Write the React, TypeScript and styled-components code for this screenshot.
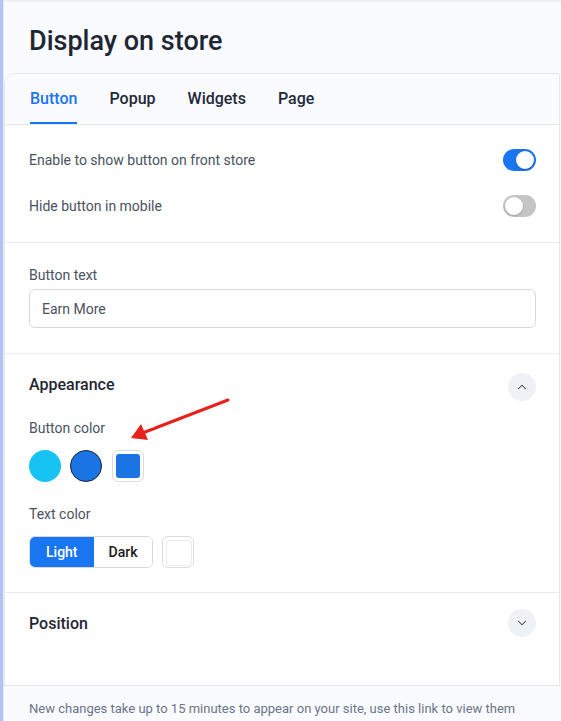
import React, { useState } from 'react';
import styled, { createGlobalStyle } from 'styled-components';
import { ChevronUp, ChevronDown } from 'lucide-react';

const GlobalStyle = createGlobalStyle`
    html, body {
        margin: 0;
        padding: 0;
        background: #f9fbff;
        font-family: Roboto, 'Liberation Sans', sans-serif;
        -webkit-font-smoothing: antialiased;
    }
    * {
        box-sizing: border-box;
    }
`;

const BLUE = '#1a75f0';

const Page = styled.div`
    display: flex;
    min-height: 721px;
    background: #f9fbff;
    box-shadow: inset 0 3px 3px -2px rgba(0, 0, 0, 0.08);
`;

const Stripe = styled.div`
    width: 4px;
    flex: none;
    background: #b3c2f2;
    border-right: 1px solid #e4e9fb;
`;

const Main = styled.div`
    flex: 1;
    min-width: 0;
    padding: 0 1px 0 0;
`;

const Title = styled.h1`
    margin: 0;
    padding: 24px 0 15px 25px;
    font-size: 27px;
    line-height: 34px;
    font-weight: 500;
    color: #1f2633;
`;

const Card = styled.div`
    border: 1px solid #e5e7eb;
    border-top-left-radius: 12px;
    background: #fff;
    overflow: hidden;
`;

const Tabs = styled.div`
    display: flex;
    gap: 32px;
    padding: 0 25px;
    height: 51px;
    background: #f9fbff;
    border-bottom: 1px solid #e5e7eb;
`;

const Tab = styled.div<{ $active?: boolean }>`
    display: flex;
    align-items: center;
    font-size: 16px;
    font-weight: 500;
    color: ${(p) => (p.$active ? BLUE : '#1f2937')};
    border-bottom: 2px solid ${(p) => (p.$active ? BLUE : 'transparent')};
`;

const Section = styled.div<{ $pt?: number; $pb?: number }>`
    position: relative;
    padding: ${(p) => p.$pt ?? 24}px 23px ${(p) => p.$pb ?? 24}px 24px;
    border-bottom: 1px solid #e8eaee;
    &:last-child {
        border-bottom: none;
    }
`;

const ToggleRow = styled.div`
    display: flex;
    align-items: center;
    justify-content: space-between;
    & + & {
        margin-top: 24px;
    }
`;

const RowLabel = styled.span`
    font-size: 14px;
    color: #4a5260;
`;

const Switch = styled.button<{ $on?: boolean }>`
    width: 33px;
    height: 22px;
    border: none;
    border-radius: 11px;
    padding: 2px;
    background: ${(p) => (p.$on ? BLUE : '#c4c4c4')};
    display: flex;
    justify-content: ${(p) => (p.$on ? 'flex-end' : 'flex-start')};
    cursor: pointer;
    &::after {
        content: '';
        width: 18px;
        height: 18px;
        border-radius: 50%;
        background: #fff;
        box-shadow: 0 1px 2px rgba(0, 0, 0, 0.2);
    }
`;

const FieldLabel = styled.div<{ $mb?: number }>`
    font-size: 14px;
    line-height: 20px;
    color: #4a5260;
    margin-bottom: ${(p) => p.$mb ?? 4}px;
`;

const TextInput = styled.input`
    display: block;
    width: 100%;
    height: 39px;
    border: 1px solid #d9d9d9;
    border-radius: 6px;
    padding: 0 12px;
    font-family: inherit;
    font-size: 14px;
    color: #4a5260;
    outline: none;
`;

const SectionHeader = styled.div`
    display: flex;
    align-items: center;
    justify-content: space-between;
`;

const SectionTitle = styled.span<{ $raise?: number }>`
    font-size: 16px;
    font-weight: 500;
    color: #1f2633;
    margin-top: ${(p) => -(p.$raise ?? 0)}px;
`;

const RoundButton = styled.button`
    width: 28px;
    height: 28px;
    border-radius: 50%;
    border: none;
    background: #eef1f5;
    color: #374151;
    display: flex;
    align-items: center;
    justify-content: center;
    padding: 0;
    cursor: pointer;
`;

const Swatches = styled.div`
    display: flex;
    gap: 9px;
    align-items: center;
`;

const Circle = styled.div<{ $color: string; $selected?: boolean }>`
    width: 32px;
    height: 32px;
    border-radius: 50%;
    background: ${(p) => p.$color};
    border: ${(p) => (p.$selected ? '1.5px solid #1b2230' : 'none')};
`;

const SquareSwatch = styled.div<{ $color: string }>`
    width: 32px;
    height: 32px;
    border: 1px solid #dcdcdc;
    border-radius: 6px;
    padding: 3px;
    margin-left: 1px;
    &::after {
        content: '';
        display: block;
        width: 100%;
        height: 100%;
        border-radius: 3px;
        background: ${(p) => p.$color};
        border: ${(p) => (p.$color === '#fff' ? '1px solid #ececec' : 'none')};
    }
`;

const Group = styled.div<{ $mt?: number }>`
    margin-top: ${(p) => p.$mt ?? 22}px;
`;

const ColorRow = styled.div`
    display: flex;
    gap: 8px;
    align-items: center;
`;

const Segmented = styled.div`
    display: flex;
    height: 32px;
    border: 1px solid #d9d9d9;
    border-radius: 6px;
    overflow: hidden;
`;

const Segment = styled.button<{ $active?: boolean }>`
    border: none;
    padding: 0 ${(p) => (p.$active ? 16 : 15)}px;
    font-family: inherit;
    font-size: 14px;
    font-weight: 500;
    background: ${(p) => (p.$active ? BLUE : '#fff')};
    color: ${(p) => (p.$active ? '#fff' : '#1a1a1a')};
    cursor: pointer;
`;

const Arrow = styled.svg`
    position: absolute;
    left: 114px;
    top: 39px;
    pointer-events: none;
`;

const Footer = styled.div`
    padding: 13px 0 0 25px;
    font-size: 13px;
    line-height: 20px;
    color: #6b7589;
`;

const Link = styled.a`
    color: ${BLUE};
    text-decoration: none;
    margin-right: 6px;
`;

const App: React.FC = () => {
    const [showButton, setShowButton] = useState(true);
    const [hideMobile, setHideMobile] = useState(false);
    const [textColor, setTextColor] = useState<'light' | 'dark'>('light');

    return (
        <>
            <GlobalStyle />
            <Page>
                <Stripe />
                <Main>
                    <Title>Display on store</Title>
                    <Card>
                        <Tabs>
                            <Tab $active>Button</Tab>
                            <Tab>Popup</Tab>
                            <Tab>Widgets</Tab>
                            <Tab>Page</Tab>
                        </Tabs>

                        <Section $pt={24} $pb={25}>
                            <ToggleRow>
                                <RowLabel>Enable to show button on front store</RowLabel>
                                <Switch $on={showButton} onClick={() => setShowButton(!showButton)} />
                            </ToggleRow>
                            <ToggleRow>
                                <RowLabel>Hide button in mobile</RowLabel>
                                <Switch $on={hideMobile} onClick={() => setHideMobile(!hideMobile)} />
                            </ToggleRow>
                        </Section>

                        <Section $pt={22} $pb={25}>
                            <FieldLabel>Button text</FieldLabel>
                            <TextInput defaultValue="Earn More" />
                        </Section>

                        <Section $pt={19} $pb={24}>
                            <SectionHeader>
                                <SectionTitle $raise={5}>Appearance</SectionTitle>
                                <RoundButton>
                                    <ChevronUp size={14} strokeWidth={1.8} />
                                </RoundButton>
                            </SectionHeader>
                            <Group $mt={17}>
                                <FieldLabel $mb={12}>Button color</FieldLabel>
                                <Swatches>
                                    <Circle $color="#17c3f2" />
                                    <Circle $color="#1b74e4" $selected />
                                    <SquareSwatch $color="#1b74e4" />
                                </Swatches>
                            </Group>
                            <Group>
                                <FieldLabel $mb={12}>Text color</FieldLabel>
                                <ColorRow>
                                    <Segmented>
                                        <Segment $active={textColor === 'light'} onClick={() => setTextColor('light')}>
                                            Light
                                        </Segment>
                                        <Segment $active={textColor === 'dark'} onClick={() => setTextColor('dark')}>
                                            Dark
                                        </Segment>
                                    </Segmented>
                                    <SquareSwatch $color="#fff" />
                                </ColorRow>
                            </Group>
                            <Arrow width="120" height="56" viewBox="0 0 120 56">
                                <line x1="109" y1="7" x2="26" y2="39" stroke="#e8211b" strokeWidth="3" strokeLinecap="round" />
                                <polygon points="12,45 22,31 29,47" fill="#e8211b" />
                            </Arrow>
                        </Section>

                        <Section $pt={16} $pb={48}>
                            <SectionHeader>
                                <SectionTitle>Position</SectionTitle>
                                <RoundButton>
                                    <ChevronDown size={14} strokeWidth={1.8} />
                                </RoundButton>
                            </SectionHeader>
                        </Section>
                    </Card>
                    <Footer>
                        New changes take up to 15 minutes to appear on your site, use this link to view them
                        <br />
                        now: <Link href="#">View changes</Link>
                        <svg width="13" height="13" viewBox="0 0 14 14" style={{ verticalAlign: -2 }}>
                            <circle cx="7" cy="7" r="6" fill="none" stroke={BLUE} strokeWidth="1.3" />
                        </svg>
                    </Footer>
                </Main>
            </Page>
        </>
    );
};

export default App;
